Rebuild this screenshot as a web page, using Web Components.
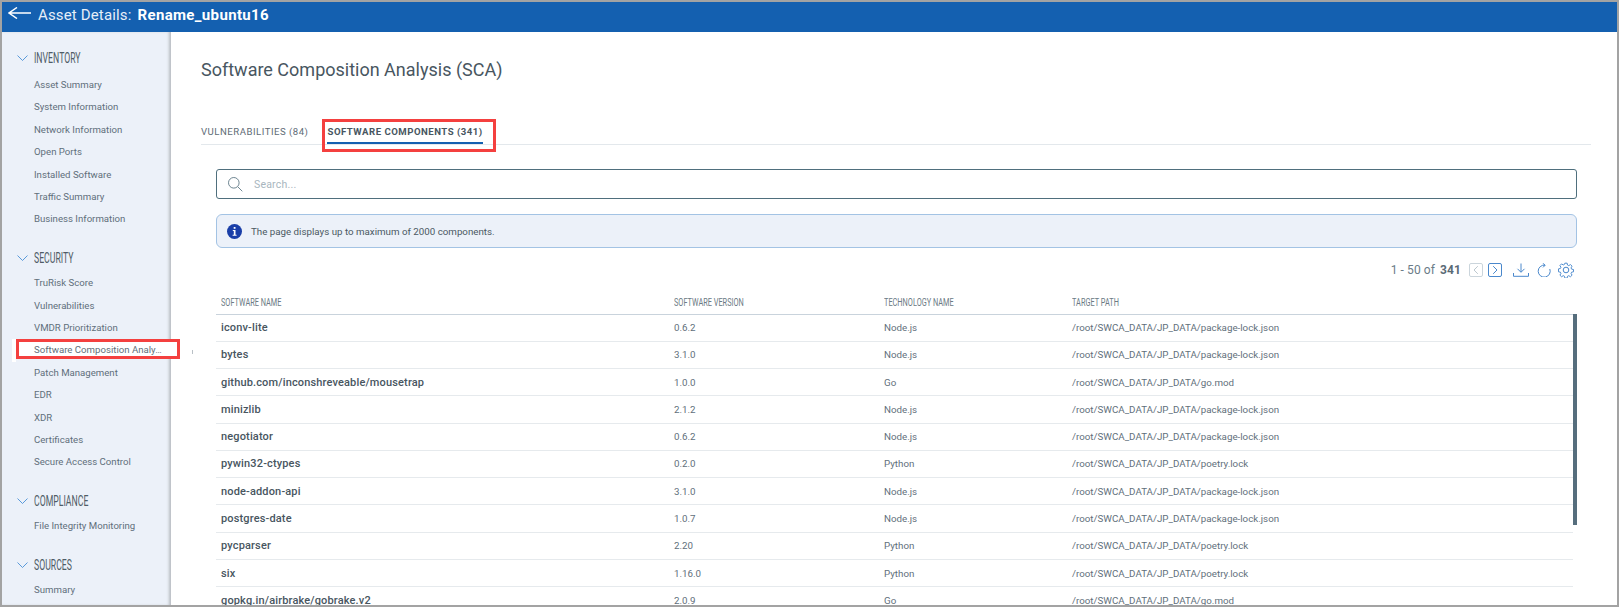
<!DOCTYPE html>
<html lang="en"><head><meta charset="utf-8"><title>Software Composition Analysis</title>
<style>
html,body{margin:0;padding:0;background:#fff;height:607px;overflow:hidden}
body{font-family:Roboto,"Liberation Sans",sans-serif;color:#525f6b}
</style></head><body>
<app-frame>
  <asset-header slot="top" label="Asset Details:" name="Rename_ubuntu16"></asset-header>
  <side-nav slot="side">
    <nav-group title="INVENTORY">
      <nav-item>Asset Summary</nav-item><nav-item>System Information</nav-item><nav-item>Network Information</nav-item><nav-item>Open Ports</nav-item><nav-item>Installed Software</nav-item><nav-item>Traffic Summary</nav-item><nav-item>Business Information</nav-item>
    </nav-group>
    <nav-group title="SECURITY">
      <nav-item>TruRisk Score</nav-item><nav-item>Vulnerabilities</nav-item><nav-item>VMDR Prioritization</nav-item><nav-item active>Software Composition Analy…</nav-item><nav-item>Patch Management</nav-item><nav-item>EDR</nav-item><nav-item>XDR</nav-item><nav-item>Certificates</nav-item><nav-item>Secure Access Control</nav-item>
    </nav-group>
    <nav-group title="COMPLIANCE"><nav-item>File Integrity Monitoring</nav-item></nav-group>
    <nav-group title="SOURCES"><nav-item>Summary</nav-item></nav-group>
  </side-nav>
  <sca-panel slot="main" heading="Software Composition Analysis (SCA)">
    <tab-bar></tab-bar>
    <search-box placeholder="Search..."></search-box>
    <info-banner>The page displays up to maximum of 2000 components.</info-banner>
    <pager-bar></pager-bar>
    <data-table></data-table>
  </sca-panel>
</app-frame>
<script>
function def(name, css, html, extra){
  customElements.define(name, class extends HTMLElement{
    connectedCallback(){
      if(this.shadowRoot) return;
      const r=this.attachShadow({mode:'open'});
      r.innerHTML='<style>'+css+'</style>'+(typeof html==='function'?html(this):html);
      if(extra) extra(r,this);
    }
  });
}
const esc=s=>String(s);
def('app-frame',`
 :host{display:grid;grid-template-rows:30px 1fr;grid-template-columns:169px 1fr;box-sizing:border-box;width:1619px;height:607px;border:2px solid #a3a3a3;overflow:hidden;background:#fff}
 .t{grid-column:1/3;display:block}.s{display:block;min-height:0;position:relative;z-index:1}.m{display:block;min-height:0;overflow:hidden}
`,`<slot class="t" name="top"></slot><slot class="s" name="side"></slot><slot class="m" name="main"></slot>`);

def('asset-header',`
 :host{display:flex;align-items:center;height:30px;background:#1460b0;color:#fff;font-family:Roboto,sans-serif;font-size:15px;box-sizing:border-box;padding:0 0 4px 6px}
 svg{width:23px;height:12px;margin:0 7px 4px 0;flex:none}
 .l{color:#e6eef8;letter-spacing:.15px}.n{font-weight:700;margin-left:6px;letter-spacing:.35px}
`,h=>`<svg viewBox="0 0 23 12" fill="none" stroke="#fff" stroke-width="1.500"><path d="M23 6H1M9 .5 1 6l8 5.500"/></svg><span class="l">${esc(h.getAttribute('label'))}</span><span class="n">${esc(h.getAttribute('name'))}</span>`);

def('side-nav',`
 :host{display:block;height:100%;background:#ecf1f9;box-sizing:border-box;padding-top:11px;box-shadow:inset -3px 0 3px -1px #b9bdc2;position:relative}
`,`<slot></slot>`);

def('nav-group',`
 :host{display:block;margin-bottom:12px}
 .h{display:flex;align-items:center;height:30px;box-sizing:border-box;padding-left:15px;margin-bottom:1px}
 :host(:not(:first-child)) .h{padding-top:1px;margin-bottom:-.5px}
 svg{width:11px;height:6px;flex:none;margin-right:6px}
 .c{display:inline-block;font-size:14.500px;font-weight:400;color:#4f5c66;transform:scaleX(.6);transform-origin:0 50%;white-space:nowrap}
`,h=>`<div class="h"><svg viewBox="0 0 11 6" fill="none" stroke="#4a90d6" stroke-width=".9"><path d="M.5.5 5.500 5.500 10.500.5"/></svg><span class="c">${esc(h.getAttribute('title'))}</span></div><slot></slot>`);

def('nav-item',`
 :host{display:block;height:22.4px;line-height:22.4px;padding-left:32px;font-size:9.650px;color:#5f6f7b;white-space:nowrap;position:relative}
 :host([active]){z-index:1}
 .box,.strip,.mark{display:none}
 :host([active]) .box{display:block;position:absolute;left:14px;right:-9px;top:0;height:20px;background:#fff;border:3px solid #f4403f;box-sizing:border-box;z-index:-1}
 :host([active]) .strip{display:block;position:absolute;left:10px;width:4px;top:0;bottom:0;background:#fff;z-index:-1}
 :host([active]) .mark{display:block;position:absolute;left:190px;width:1px;height:4px;top:11px;background:#b9c0c6}
`,`<div class="strip"></div><div class="box"></div><div class="mark"></div><slot></slot>`);

def('sca-panel',`
 :host{display:block;padding:26px 26px 0 30px;box-sizing:border-box;height:100%;overflow:hidden;background:#fff}
 h1{margin:0;font-size:18px;line-height:24px;font-weight:400;color:#48565f}
 .inner{padding:0 14px 0 15px}
 ::slotted(tab-bar){margin:0 -14px 0 -15px}
`,h=>`<h1>${esc(h.getAttribute('heading'))}</h1><div class="inner"><slot></slot></div>`);

def('tab-bar',`
 :host{display:flex;height:62px;margin-top:0;align-items:flex-end;border-bottom:1px solid #e3e8ec;box-sizing:content-box}
 .t{font-size:9.600px;letter-spacing:.5px;height:19px;line-height:14px;color:#5e6b75;white-space:nowrap;box-sizing:border-box;position:relative}
 .t:first-child{margin-left:-1px}
 .t.a{font-weight:700;color:#48565f;margin-left:19px;border-bottom:2px solid #1460b0}
 .t.a::after{content:"";position:absolute;left:-5px;right:-13px;top:-6px;bottom:-10px;border:3px solid #f4403f}
`,`<div class="t">VULNERABILITIES (84)</div><div class="t a">SOFTWARE COMPONENTS (341)</div>`);

def('search-box',`
 :host{display:flex;align-items:center;height:30px;margin-top:24px;box-sizing:border-box;border:1px solid #4f6f7d;border-radius:3px;padding-left:10px;background:#fff}
 svg{width:16px;height:16px;margin-right:11px;flex:none}
 span{font-size:10.500px;letter-spacing:.2px;color:#a8b6be}
`,h=>`<svg viewBox="0 0 16 16" fill="none" stroke="#6f8692" stroke-width="1"><circle cx="6.800" cy="6.800" r="5.300"/><path d="m10.800 10.800 4.500 4.500"/></svg><span>${esc(h.getAttribute('placeholder'))}</span>`);

def('info-banner',`
 :host{display:flex;align-items:center;height:34px;margin-top:15px;box-sizing:border-box;border:1px solid #a3c3e4;border-radius:6px;background:#ecf1f9;padding-left:10px;font-size:9.750px;color:#4a5862}
 svg{width:15px;height:15px;margin-right:9px;flex:none}
`,`<svg viewBox="0 0 15 15"><circle cx="7.500" cy="7.500" r="7.500" fill="#1a3fa8"/><rect x="6.700" y="3" width="1.800" height="1.800" fill="#fff"/><path d="M5.800 6h2.700v4.800h1.100v1H5.600v-1h1.200V7H5.800z" fill="#fff"/></svg><slot></slot>`);

def('pager-bar',`
 :host{display:flex;align-items:center;justify-content:flex-end;height:16px;margin-top:14px;font-size:12px;color:#6b7c88;letter-spacing:.1px;padding-right:3px}
 b{margin-left:5px;font-weight:700;color:#5a6a75;margin-right:8px}
 svg{flex:none;display:block}
 .p{width:14px;height:14px;margin-right:5px}.n{width:14px;height:14px;margin-right:11px}
 .d{width:16px;height:14px;margin-right:8px}.r{width:14px;height:14px;margin-right:7px}.g{width:16px;height:16px}
`,`<span>1 - 50 of</span><b>341</b>
<svg class="p" viewBox="0 0 14 14" fill="none"><rect x=".5" y=".5" width="13" height="13" rx="1.500" stroke="#cbd5dc"/><path d="M8.800 3.200 5 7l3.800 3.800" stroke="#bcc8cf"/></svg>
<svg class="n" viewBox="0 0 14 14" fill="none"><rect x=".5" y=".5" width="13" height="13" rx="1.500" stroke="#4a88cc"/><path d="M5.200 3.200 9 7l-3.800 3.800" stroke="#4a88cc"/></svg>
<svg class="d" viewBox="0 0 16 14" fill="none" stroke="#4a88cc"><path d="M8 .5v8.500M4.500 5.800 8 9.300l3.500-3.500M.5 10v3.300h15V10"/></svg>
<svg class="r" viewBox="0 0 14 14" fill="none" stroke="#4a88cc"><path d="M8 2.200A6 6 0 1 0 12.800 6M5.800.3 8.200 2.200 6 4.400"/></svg>
<svg class="g" viewBox="0 0 16 16" fill="none" stroke="#4a88cc"><circle cx="8" cy="8" r="2.800"/><path d="M6.800.8h2.400l.4 2 1.300.6 1.800-1.100 1.700 1.700-1.100 1.800.6 1.300 2 .4v2.400l-2 .4-.6 1.300 1.100 1.800-1.700 1.700-1.800-1.100-1.300.6-.4 2H6.800l-.4-2-1.300-.6-1.800 1.100-1.700-1.700 1.100-1.800-.6-1.300-2-.4V6.800l2-.4.6-1.300-1.100-1.800 1.700-1.700 1.800 1.100 1.300-.6z" transform="translate(.4 .4) scale(.95)"/></svg>`);

const rows=[
["iconv-lite","0.6.2","Node.js","/root/SWCA_DATA/JP_DATA/package-lock.json"],
["bytes","3.1.0","Node.js","/root/SWCA_DATA/JP_DATA/package-lock.json"],
["github.com/inconshreveable/mousetrap","1.0.0","Go","/root/SWCA_DATA/JP_DATA/go.mod"],
["minizlib","2.1.2","Node.js","/root/SWCA_DATA/JP_DATA/package-lock.json"],
["negotiator","0.6.2","Node.js","/root/SWCA_DATA/JP_DATA/package-lock.json"],
["pywin32-ctypes","0.2.0","Python","/root/SWCA_DATA/JP_DATA/poetry.lock"],
["node-addon-api","3.1.0","Node.js","/root/SWCA_DATA/JP_DATA/package-lock.json"],
["postgres-date","1.0.7","Node.js","/root/SWCA_DATA/JP_DATA/package-lock.json"],
["pycparser","2.20","Python","/root/SWCA_DATA/JP_DATA/poetry.lock"],
["six","1.16.0","Python","/root/SWCA_DATA/JP_DATA/poetry.lock"],
["gopkg.in/airbrake/gobrake.v2","2.0.9","Go","/root/SWCA_DATA/JP_DATA/go.mod"]];
def('data-table',`
 :host{display:block;margin-top:12px;position:relative;font-size:9.750px}
 .r{display:grid;grid-template-columns:453px 210px 188px 1fr;padding-left:5px;margin-right:4px;align-items:center;box-sizing:border-box;height:27.270px;border-bottom:1px solid #e6eaed;color:#5f6f7b;white-space:nowrap}
 .r div:first-child{font-size:11px;font-weight:500;color:#48565f;letter-spacing:.15px}
 .h{height:24.500px;border-bottom:1px solid #c9d3dc;margin-right:0;padding-top:1px}
 .h span{display:inline-block;font-size:11.500px;transform:scaleX(.64);transform-origin:0 50%;color:#6b7a84;letter-spacing:0}
 .h div:first-child{font-size:9.750px;font-weight:400;letter-spacing:0}
 .bar{position:absolute;right:0;top:24px;width:4px;height:211px;background:#566e7d}
`,`<div class="r h"><div><span>SOFTWARE NAME</span></div><div><span>SOFTWARE VERSION</span></div><div><span>TECHNOLOGY NAME</span></div><div><span>TARGET PATH</span></div></div>`+rows.map(r=>`<div class="r">${r.map(c=>`<div>${c}</div>`).join('')}</div>`).join('')+`<div class="bar"></div>`);
</script>
</body></html>
